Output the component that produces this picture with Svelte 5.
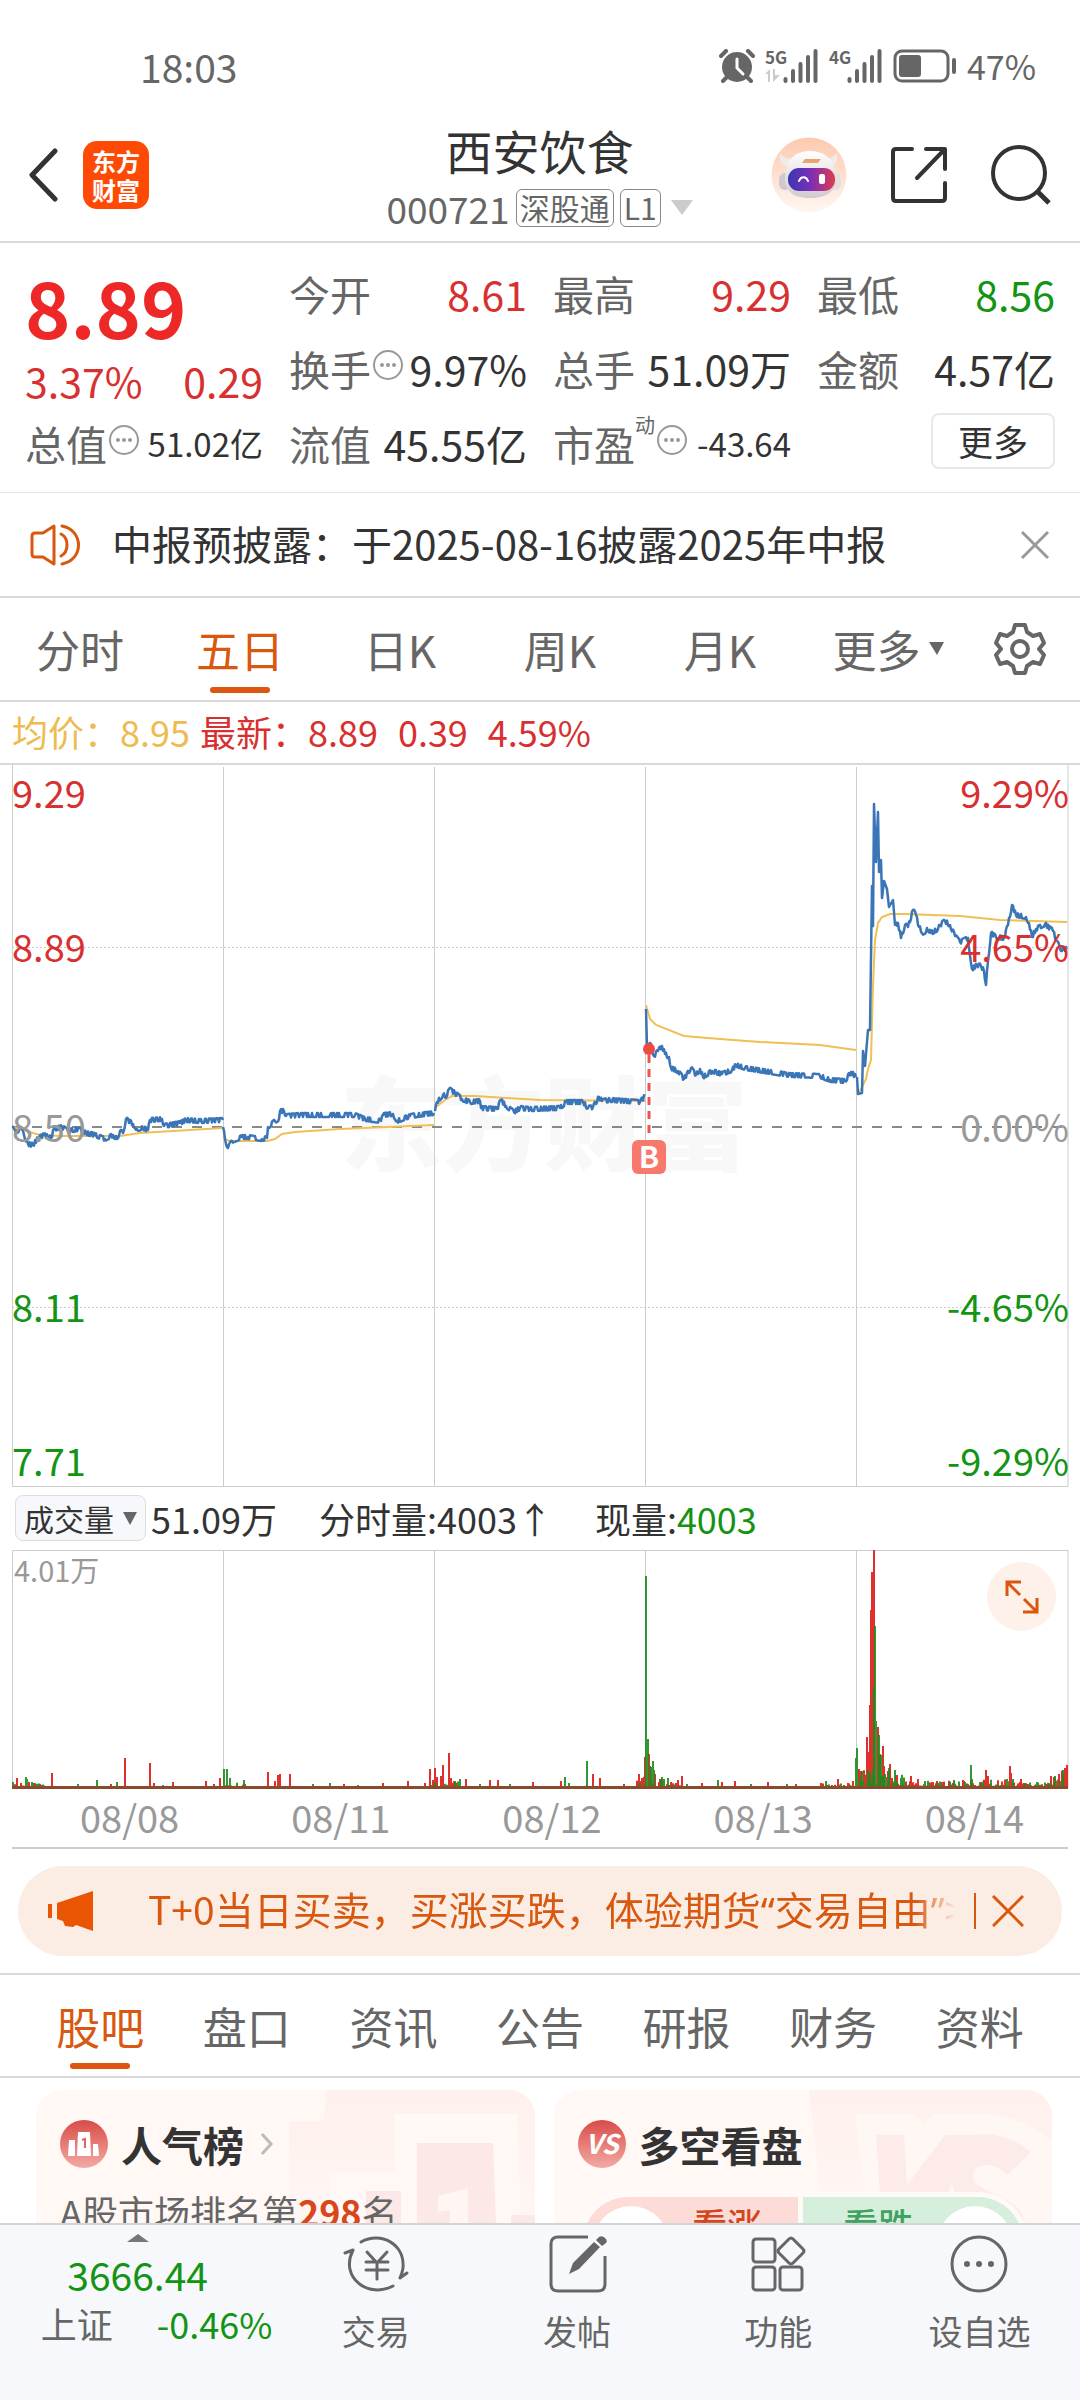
<script lang="ts">
  type Point = [number, number];
  type Bar = { x: number; h: number; up: boolean };

  const periods = ["分时", "五日", "日K", "周K", "月K"];
  const sections = ["股吧", "盘口", "资讯", "公告", "研报", "财务", "资料"];
  const dates = ["08/08", "08/11", "08/12", "08/13", "08/14"];
  const dayLines = [223, 434, 645, 856];

  let period = $state("五日");
  let section = $state("股吧");
  let showNotice = $state(true);
  let showPromo = $state(true);

  const priceLabels = [
    { y: 43, price: "9.29", pct: "9.29%", tone: "up" },
    { y: 197, price: "8.89", pct: "4.65%", tone: "up" },
    { y: 377, price: "8.50", pct: "0.00%", tone: "flat" },
    { y: 557, price: "8.11", pct: "-4.65%", tone: "down" },
    { y: 711, price: "7.71", pct: "-9.29%", tone: "down" },
  ];

  // one array per trading day
  const price: Point[][] = [
    [[12,362],[16,369],[20,362],[24,370],[28,379],[33,380],[38,373],[44,370],[51,373],[54,364],[62,362],[68,366],[78,364],[86,368],[95,370],[105,374],[113,370],[117,374],[120,366],[123,368],[126,354],[133,359],[137,364],[143,363],[148,365],[150,355],[162,354],[164,361],[180,358],[186,355],[200,356],[223,355]],
    [[223,362],[225,374],[228,383],[232,376],[242,372],[248,372],[262,374],[267,373],[268,362],[275,356],[279,354],[280,346],[284,346],[286,351],[300,350],[330,350],[355,350],[365,354],[381,356],[383,350],[393,349],[397,356],[410,351],[434,348]],
    [[435,346],[437,337],[443,330],[447,331],[449,324],[455,328],[462,334],[470,337],[480,336],[481,343],[497,344],[501,335],[506,341],[514,347],[520,343],[530,344],[560,343],[566,337],[583,337],[588,343],[593,342],[599,332],[602,336],[610,335],[640,337],[645,331]],
    [[646,244],[647,282],[650,278],[652,284],[654,291],[658,286],[662,281],[665,289],[669,292],[671,303],[678,306],[684,314],[691,303],[696,310],[700,304],[703,312],[712,306],[722,309],[732,305],[736,300],[745,303],[770,307],[790,310],[820,311],[830,315],[845,316],[851,307],[856,312]],
    [[857,312],[858,329],[862,328],[863,286],[865,301],[868,265],[870,265],[872,121],[873,161],[874,39],[876,97],[878,47],[879,107],[881,95],[882,133],[884,116],[887,124],[889,142],[893,135],[895,160],[898,158],[901,173],[905,160],[908,162],[913,145],[916,150],[919,162],[924,169],[927,163],[931,168],[938,164],[940,160],[945,156],[950,160],[955,171],[960,177],[968,173],[972,204],[977,200],[981,201],[984,206],[986,220],[988,196],[991,168],[996,172],[1004,173],[1008,160],[1012,140],[1016,150],[1026,152],[1029,158],[1032,172],[1036,164],[1045,159],[1053,166],[1057,176],[1060,184],[1067,184]],
  ];

  const average: Point[][] = [
    [[12,362],[40,370],[60,371],[120,371],[140,368],[223,363]],
    [[224,373],[229,376],[267,376],[275,374],[282,369],[295,367],[340,364],[434,360]],
    [[436,342],[445,335],[452,331],[475,331],[540,335],[645,336]],
    [[646,240],[648,247],[650,254],[656,260],[684,271],[720,274],[760,277],[820,280],[856,285]],
    [[858,329],[862,322],[866,314],[868,304],[871,295],[873,220],[875,175],[878,158],[882,152],[890,149],[905,149],[960,151],[1000,155],[1067,157]],
  ];

  function makeRandom(seed: number) {
    return () => {
      seed = (seed * 16807) % 2147483647;
      return seed / 2147483647;
    };
  }

  function toPath(points: Point[]) {
    return "M" + points.map(([x, y]) => `${x} ${y.toFixed(1)}`).join("L");
  }

  // adds the one-tick flicker of the minute data between two key points
  function withTicks(points: Point[], seed: number) {
    const random = makeRandom(seed);
    const out: Point[] = [points[0]];
    for (let i = 1; i < points.length; i++) {
      const [x0, y0] = points[i - 1];
      const [x1, y1] = points[i];
      for (let x = x0 + 1; x < x1; x += 1) {
        if (x > 857 && x < 895) continue;
        const y = y0 + ((y1 - y0) * (x - x0)) / (x1 - x0);
        out.push([x, y + (random() > 0.5 ? 2 : -2)]);
      }
      out.push([x1, y1]);
    }
    return toPath(out);
  }

  const upSpikes: Point[] = [
    [17,10],[21,5],[29,6],[40,4],[52,15],[111,4],[125,30],[150,25],[154,5],[173,6],[206,7],[214,4],[220,10],[268,16],[275,7],[278,13],[280,14],[290,14],[344,4],[383,5],[408,7],[425,5],[430,19],[433,8],[435,20],[437,11],[441,12],[443,23],[449,35],[451,10],[466,9],[490,8],[498,8],[533,6],[561,7],[593,14],[600,10],[624,4],[639,14],[641,7],
    [645,31],[649,34],[650,22],[655,14],[660,9],[671,6],[678,8],[682,12],[702,5],[722,6],[735,7],[768,6],[796,4],[838,9],[848,5],[853,7],
    [859,19],[861,17],[864,16],[867,51],[868,36],[870,83],[871,178],[872,216],[874,238],[878,61],[880,34],[883,42],[884,22],[890,24],[897,13],[911,12],[918,9],[933,6],[937,7],[942,6],[963,8],[986,18],[988,12],[1010,22],[1011,15],[1021,9],[1063,14],[1065,20],[1067,23],
  ];
  const downSpikes: Point[] = [
    [13,6],[26,11],[27,9],[32,6],[78,4],[97,8],[117,6],[163,3],[224,19],[227,19],[230,10],[244,8],[313,4],[330,5],[358,3],[455,7],[460,9],[480,4],[510,4],[565,11],[569,5],[587,27],
    [646,212],[648,49],[651,21],[653,27],[654,18],[662,11],[664,9],[668,10],[687,4],[718,8],[751,4],[787,4],[826,7],
    [856,30],[857,40],[862,17],[868,18],[874,100],[875,162],[876,67],[879,53],[881,33],[885,14],[889,20],[895,18],[901,10],[925,7],[950,6],[954,8],[971,23],[972,9],[1013,9],[1025,5],[1055,12],[1060,7],
  ];

  function volumeBars(): Bar[] {
    const random = makeRandom(97);
    const out: Bar[] = [];
    for (let x = 13; x < 1068; x += 1) {
      let top = 2;
      if (x < 45 || (x > 222 && x < 248) || (x > 428 && x < 460)) top = 6;
      if (x > 636 && x < 682) top = 14 - (x - 645) / 5;
      if (x > 820 && x < 857) top = 5;
      if (x > 856 && x < 890) top = 20;
      if (x >= 890 && x < 910) top = 18 - (x - 890) / 3;
      if (x >= 910) top = 9;
      if (x > 1040) top = 6 + (x - 1040) / 2;
      out.push({ x, h: Math.max(1, random() * random() * top + top * 0.15), up: random() > 0.4 });
    }
    for (const [x, h] of upSpikes) out.push({ x, h, up: true });
    for (const [x, h] of downSpikes) out.push({ x, h, up: false });
    return out;
  }

  const bars = volumeBars();

  function barPath(up: boolean) {
    return bars
      .filter((b) => b.up === up)
      .map((b) => `M${b.x} 238V${(238 - b.h).toFixed(1)}`)
      .join("");
  }
</script>

{#snippet info()}
  <svg class="info" viewBox="0 0 30 30" aria-hidden="true">
    <circle cx="15" cy="15" r="14" fill="none" stroke="#999" stroke-width="2" />
    <circle cx="9" cy="15" r="2" fill="#999" />
    <circle cx="15" cy="15" r="2" fill="#999" />
    <circle cx="21" cy="15" r="2" fill="#999" />
  </svg>
{/snippet}

{#snippet signal(label: string, data: boolean)}
  <svg class="signal" viewBox="0 0 54 34" aria-hidden="true">
    <text x="0" y="15" font-size="17" font-weight="700" fill="#666">{label}</text>
    {#if data}
      <path d="M0 25l5-5v13H3v-8zM8 20v13l7-7h-5v-6z" fill="#ccc" />
    {/if}
    <path
      d="M20.500 32v-2M28 32V22M35.500 32V15M43 32V8M50.500 32V2"
      stroke="#666"
      stroke-width="4"
      stroke-linecap="round"
    />
  </svg>
{/snippet}

<div class="app">
  <div class="status">
    <span class="clock">18:03</span>
    <div class="status-icons">
      <svg class="alarm" viewBox="0 0 36 34" aria-hidden="true">
        <path d="M2 7l5-5M34 7l-5-5M4 32l4-4M32 32l-4-4" stroke="#666" stroke-width="4" stroke-linecap="round" />
        <circle cx="18" cy="18" r="15" fill="#666" />
        <path d="M18 10v9l6 6" fill="none" stroke="#fff" stroke-width="3" stroke-linecap="round" />
      </svg>
      {@render signal("5G", true)}
      {@render signal("4G", false)}
      <svg class="battery" viewBox="0 0 64 34" aria-hidden="true">
        <rect x="2" y="2" width="53" height="30" rx="7" fill="none" stroke="#666" stroke-width="3" />
        <rect x="6" y="6" width="22" height="22" rx="3" fill="#666" />
        <path d="M61 11v12" stroke="#666" stroke-width="4" stroke-linecap="round" />
      </svg>
      <span class="percent">47%</span>
    </div>
  </div>

  <header class="header">
    <div class="side">
      <button class="icon-btn" aria-label="返回">
        <svg width="30" height="54" viewBox="0 0 30 54">
          <path d="M27 3L4 27l23 24" fill="none" stroke="#333" stroke-width="5" stroke-linecap="round" stroke-linejoin="round" />
        </svg>
      </button>
      <a class="logo" href="#home"><span>东方</span><span>财富</span></a>
    </div>
    <div class="title">
      <h1>西安饮食</h1>
      <div class="code">
        <span>000721</span>
        <span class="badge">深股通</span>
        <span class="badge">L1</span>
        <svg class="caret" width="22" height="15" viewBox="0 0 22 15" aria-hidden="true"><path d="M0 0h22L11 15z" fill="#ccc" /></svg>
      </div>
    </div>
    <div class="side right">
      <button class="icon-btn" aria-label="智能助手">
        <svg width="76" height="76" viewBox="0 0 76 76">
          <defs>
            <linearGradient id="halo" x1="0" y1="0" x2="0" y2="1">
              <stop offset="0" stop-color="#fdc9ae" />
              <stop offset="1" stop-color="#fff7f2" />
            </linearGradient>
            <linearGradient id="visor" x1="0" y1="0" x2="1" y2="0">
              <stop offset="0" stop-color="#3b37b4" />
              <stop offset="0.5" stop-color="#7d2fb5" />
              <stop offset="1" stop-color="#e23a4e" />
            </linearGradient>
            <linearGradient id="helmet" x1="0" y1="0" x2="0" y2="1">
              <stop offset="0" stop-color="#fff" />
              <stop offset="1" stop-color="#d0cacf" />
            </linearGradient>
          </defs>
          <circle cx="38" cy="38" r="37.500" fill="url(#halo)" />
          <path d="M9 16c-1 9 1 13 8 13l8-9c-8 3-13 1-16-4zM66 16c1 9-1 13-8 13l-8-9c8 3 13 1 16-4z" fill="#f1eaea" />
          <rect x="8" y="36" width="12" height="17" rx="6" fill="#cfc9cf" />
          <rect x="58" y="36" width="12" height="17" rx="6" fill="#e6dfe2" />
          <path d="M39 14c17 0 26 11 26 28 0 12-9 19-26 19S14 54 14 42c0-17 8-28 25-28z" fill="url(#helmet)" />
          <path d="M31 26l3-4h16l-3 4z" fill="#e8a570" />
          <rect x="17" y="31" width="47" height="23" rx="11" fill="url(#visor)" />
          <path d="M28 44c2-5 7-5 9 0" fill="none" stroke="#fff" stroke-width="2" stroke-linecap="round" />
          <rect x="48" y="37" width="6" height="10" rx="2" fill="#fff" />
        </svg>
      </button>
      <button class="icon-btn" aria-label="分享">
        <svg width="58" height="58" viewBox="0 0 58 58">
          <path d="M22 3H6Q3 3 3 6v46q0 3 3 3h46q3 0 3-3V37M36 3h19v20M54 4L27 32" fill="none" stroke="#333" stroke-width="4" stroke-linecap="round" stroke-linejoin="round" />
        </svg>
      </button>
      <button class="icon-btn" aria-label="搜索">
        <svg width="60" height="60" viewBox="0 0 60 60">
          <circle cx="28" cy="28" r="26" fill="none" stroke="#333" stroke-width="4" />
          <path d="M46 46l12 12" stroke="#333" stroke-width="5" />
        </svg>
      </button>
    </div>
  </header>

  <section class="quote">
    <div class="last">
      <strong>8.89</strong>
      <div class="change"><span>3.37%</span><span>0.29</span></div>
    </div>
    <div class="cell"><span class="label">今开</span><span class="up">8.61</span></div>
    <div class="cell"><span class="label">最高</span><span class="up">9.29</span></div>
    <div class="cell"><span class="label">最低</span><span class="down">8.56</span></div>
    <div class="cell"><span class="label">换手{@render info()}</span><span>9.97%</span></div>
    <div class="cell"><span class="label">总手</span><span>51.09万</span></div>
    <div class="cell"><span class="label">金额</span><span>4.57亿</span></div>
    <div class="cell"><span class="label">总值{@render info()}</span><span class="small">51.02亿</span></div>
    <div class="cell"><span class="label">流值</span><span>45.55亿</span></div>
    <div class="cell"><span class="label">市盈<sup>动</sup>{@render info()}</span><span class="small">-43.64</span></div>
    <div class="cell end"><button class="more">更多</button></div>
  </section>

  {#if showNotice}
    <div class="notice">
      <svg width="52" height="42" viewBox="0 0 52 42" aria-hidden="true">
        <path d="M24 2L13 9H5Q2 9 2 12v18q0 3 3 3h8l11 7z" fill="none" stroke="#d9580f" stroke-width="3" stroke-linejoin="round" />
        <path d="M31 10c8 4 8 18 0 22M32 2c22 4 22 34 0 38" fill="none" stroke="#d9580f" stroke-width="3" stroke-linecap="round" />
      </svg>
      <span>中报预披露：于2025-08-16披露2025年中报</span>
      <button class="icon-btn" aria-label="关闭公告" onclick={() => (showNotice = false)}>
        <svg width="30" height="30" viewBox="0 0 30 30"><path d="M2 2l26 26M28 2L2 28" stroke="#999" stroke-width="3" /></svg>
      </button>
    </div>
  {/if}

  <nav class="periods">
    {#each periods as name}
      <button class="tab" class:active={period === name} onclick={() => (period = name)}>{name}</button>
    {/each}
    <button class="tab more-tab">更多<svg width="15" height="14" viewBox="0 0 15 14" aria-hidden="true"><path d="M0 0h15L8 13z" fill="#666" /></svg></button>
    <button class="tab" aria-label="设置">
      <svg width="52" height="52" viewBox="0 0 52 52">
        <path d="M21 2h10l2 7 6 4 7-2 4 9-5 6 5 6-4 9-7-2-6 4-2 7H21l-2-7-6-4-7 2-4-9 5-6-5-6 4-9 7 2 6-4z" fill="none" stroke="#666" stroke-width="4" stroke-linejoin="round" />
        <circle cx="26" cy="26" r="8" fill="none" stroke="#666" stroke-width="4" />
      </svg>
    </button>
  </nav>

  <div class="legend">
    <span class="avg">均价：8.95</span>
    <span>最新：8.89</span>
    <span class="spaced">0.39</span>
    <span class="spaced">4.59%</span>
  </div>

  <svg class="chart" viewBox="0 0 1080 722" role="img" aria-label="五日走势">
    <text class="watermark" x="544" y="398" text-anchor="middle">东方财富</text>
    <path d="M12.500 0V721.500H1068V0" fill="none" stroke="#ccc" />
    {#each dayLines as x}
      <path d={`M${x + 0.5} 2V722`} stroke="#ccc" />
    {/each}
    <path d="M12 182.500H1068M12 542.500H1068" stroke="#ccc" stroke-dasharray="2 2" />
    <path d="M12 362H1068" stroke="#888" stroke-width="2" stroke-dasharray="10 10" />
    {#each average as day}
      <path d={toPath(day)} fill="none" stroke="#f0bf55" stroke-width="2" />
    {/each}
    {#each price as day, i}
      <path d={withTicks(day, 31 + i * 7)} fill="none" stroke="#3a75b7" stroke-width="2.5" stroke-linejoin="round" />
    {/each}
    {#each priceLabels as row}
      <text class="axis {row.tone}" x="12" y={row.y}>{row.price}</text>
      <text class="axis {row.tone}" x="1069" y={row.y} text-anchor="end">{row.pct}</text>
    {/each}
    <path d="M649 290v84" stroke="#ef5350" stroke-width="3" stroke-dasharray="8 6" />
    <circle cx="649" cy="284" r="6" fill="#ee4b40" />
    <rect x="632" y="375" width="34" height="34" rx="6" fill="#f7796b" />
    <text x="649" y="403" font-size="30" font-weight="700" fill="#fff" text-anchor="middle">B</text>
  </svg>

  <div class="volume-head">
    <button class="metric">成交量<svg width="14" height="13" viewBox="0 0 14 13" aria-hidden="true"><path d="M0 0h14L7 13z" fill="#666" /></svg></button>
    <span>51.09万</span>
    <span class="minute">分时量:4003↑</span>
    <span class="current">现量:<b>4003</b></span>
  </div>

  <div class="volume">
    <svg class="chart" viewBox="0 0 1080 239" role="img" aria-label="成交量">
      <path d="M12.500 238V.5H1068V238" fill="none" stroke="#ccc" />
      {#each dayLines as x}
        <path d={`M${x + 0.5} 0V238`} stroke="#ccc" />
      {/each}
      <path d={barPath(true)} stroke="#e0302c" stroke-width="2" />
      <path d={barPath(false)} stroke="#1d8c1d" stroke-width="2" stroke-opacity="0.9" />
      <path d="M12 237.500H1068" stroke="#8a4a2c" stroke-width="3" />
      <text x="14" y="32" font-size="29" fill="#999">4.01万</text>
    </svg>
    <button class="expand" aria-label="全屏">
      <svg width="34" height="34" viewBox="0 0 34 34">
        <path d="M2 16V2h14M3 3l12 12M32 18v14H18M31 31L19 19" fill="none" stroke="#d9580f" stroke-width="3" />
      </svg>
    </button>
  </div>

  <div class="dates">
    {#each dates as date}
      <span>{date}</span>
    {/each}
  </div>

  {#if showPromo}
    <div class="promo">
      <svg width="46" height="40" viewBox="0 0 46 40" aria-hidden="true">
        <path d="M0 13h4v14H0zM9 12L45 0v40l-17-6-3 2-8-1-2-5-6-2z" fill="#ea5504" />
      </svg>
      <a href="#promo">T+0当日买卖，买涨买跌，体验期货<q>交易自由</q>&gt;</a>
      <i class="divider"></i>
      <button class="icon-btn" aria-label="关闭推广" onclick={() => (showPromo = false)}>
        <svg width="32" height="32" viewBox="0 0 32 32"><path d="M1 1l30 30M31 1L1 31" stroke="#d9580f" stroke-width="3" /></svg>
      </button>
    </div>
  {/if}

  <nav class="sections">
    {#each sections as name}
      <button class="tab" class:active={section === name} onclick={() => (section = name)}>{name}</button>
    {/each}
  </nav>

  <div class="cards">
    <article class="card">
      <svg class="card-bg" viewBox="0 0 246 134" aria-hidden="true">
        <defs>
          <linearGradient id="fade" x1="0" y1="0" x2="0" y2="1">
            <stop offset="0" stop-color="#fef0ed" />
            <stop offset="1" stop-color="#fff6f3" />
          </linearGradient>
        </defs>
        <path d="M37 0h209v134h-14L228 24H106v58H40v52H-10V31h45z" fill="url(#fade)" />
        <path d="M128 53h76l3 81h-79z" fill="#fce8e6" />
        <path d="M77 101h35v33H77zM222 125h24v9h-24z" fill="#fce8e6" />
        <path d="M149 106l30-8v36h-18v-14l-12 2z" fill="#fff5f2" />
      </svg>
      <h2>
        <svg class="card-icon" viewBox="0 0 48 48" aria-hidden="true">
          <defs>
            <linearGradient id="disc" x1="0" y1="0" x2="0" y2="1">
              <stop offset="0" stop-color="#d94c48" />
              <stop offset="1" stop-color="#f3aaa5" />
            </linearGradient>
          </defs>
          <circle cx="24" cy="24" r="24" fill="url(#disc)" />
          <path d="M18 12h12l1 24H17zM9 20h6v16H8zM33 24h5l1 12h-6z" fill="#fff" />
          <path d="M22 20l3-1v9" fill="none" stroke="#dd6762" stroke-width="2" />
        </svg>
        人气榜
        <svg class="chevron" width="14" height="24" viewBox="0 0 14 24" aria-hidden="true"><path d="M2 2l9 10-9 10" fill="none" stroke="#bbb" stroke-width="3" /></svg>
      </h2>
      <p>A股市场排名第<b>298</b>名</p>
    </article>
    <article class="card">
      <svg class="card-bg" viewBox="0 0 246 134" aria-hidden="true">
        <path d="M3 0h243v134H18z" fill="url(#fade)" />
        <path d="M49 24h60l8 12 10-12h34c40-2 66 10 85 28v82H62z" fill="#fff7f4" />
        <path d="M70 45h28l3 50 38-50h29c20-3 41 4 57 17l-24 23c-12-14-34-13-34 1 0 18 48 17 52 48h-62l-11-40-20 40H76z" fill="#fdebe9" />
      </svg>
      <h2>
        <svg class="card-icon" viewBox="0 0 48 48" aria-hidden="true">
          <circle cx="24" cy="24" r="24" fill="url(#disc)" />
          <text x="24" y="34" font-size="27" font-weight="700" font-style="italic" fill="#fff" text-anchor="middle">VS</text>
        </svg>
        多空看盘
      </h2>
      <div class="vote">
        <button class="bull"><i></i>看涨</button>
        <button class="bear">看跌<i></i></button>
      </div>
    </article>
  </div>

  <nav class="bottom">
    <a class="index" href="#index">
      <svg width="22" height="8" viewBox="0 0 22 8" aria-hidden="true"><path d="M0 8L11 0l11 8z" fill="#777" /></svg>
      <span class="down">3666.44</span>
      <span class="index-row"><span>上证</span><span class="down">-0.46%</span></span>
    </a>
    <a href="#trade">
      <svg viewBox="0 0 66 60" aria-hidden="true">
        <g fill="none" stroke="#666" stroke-width="3" stroke-linecap="round" stroke-linejoin="round">
          <path d="M18 8C38-3 62 10 60 34q-1 6-3 10l7-5" />
          <path d="M50 52C26 65-4 44 10 16L2 19" />
          <path d="M24 18l10 11 10-11M34 29v16M23 28h22M23 36h22" />
        </g>
      </svg>
      交易
    </a>
    <a href="#post">
      <svg viewBox="0 0 66 60" aria-hidden="true">
        <path d="M44 3H14Q7 3 7 10v40q0 7 7 7h40q7 0 7-7V22" fill="none" stroke="#666" stroke-width="3" />
        <path d="M25 40l4-11L50 8l6 5-21 22zM52 6l3-3q3-2 6 1t1 5l-4 3z" fill="#666" />
      </svg>
      发帖
    </a>
    <a href="#tools">
      <svg viewBox="0 0 66 60" aria-hidden="true">
        <g fill="none" stroke="#666" stroke-width="3">
          <rect x="8" y="5" width="22" height="23" rx="3" />
          <rect x="8" y="33" width="22" height="23" rx="3" />
          <rect x="35" y="33" width="22" height="23" rx="3" />
          <path d="M44 5q2-2 4 0l10 10q2 2 0 4L48 29q-2 2-4 0L34 19q-2-2 0-4z" />
        </g>
      </svg>
      功能
    </a>
    <a href="#watch">
      <svg viewBox="0 0 66 60" aria-hidden="true">
        <circle cx="33" cy="30" r="27" fill="none" stroke="#666" stroke-width="3" />
        <g fill="#666">
          <circle cx="21" cy="30" r="3" />
          <circle cx="33" cy="30" r="3" />
          <circle cx="45" cy="30" r="3" />
        </g>
      </svg>
      设自选
    </a>
  </nav>
</div>

<style>
  :global(body) {
    margin: 0;
    background: #fff;
  }

  .app {
    height: 100vh;
    display: flex;
    flex-direction: column;
    overflow: hidden;
    color: #333;
    font-family: "Noto Sans CJK SC", "Noto Sans", sans-serif;
    font-size: 36px;
    line-height: 40px;
  }

  .app > * {
    flex: none;
    box-sizing: border-box;
  }

  button {
    border: 0;
    padding: 0;
    background: none;
    color: inherit;
    font: inherit;
    cursor: pointer;
  }

  a {
    color: inherit;
    text-decoration: none;
  }

  svg {
    display: block;
  }

  h1,
  h2,
  p {
    margin: 0;
  }

  .up {
    color: #d83030;
    fill: #d83030;
  }

  .down {
    color: #149414;
    fill: #149414;
  }

  .icon-btn {
    display: flex;
  }

  /* status bar */
  .status {
    height: 94px;
    padding: 38px 44px 0 140px;
    display: flex;
    justify-content: space-between;
    align-items: center;
    color: #666;
  }

  .clock {
    font-size: 39px;
  }

  .status-icons {
    display: flex;
    align-items: center;
    gap: 10px;
  }

  .alarm {
    width: 36px;
    height: 34px;
  }

  .signal {
    width: 54px;
    height: 34px;
    overflow: visible;
  }

  .battery {
    width: 64px;
    height: 34px;
  }

  .percent {
    font-size: 34px;
  }

  /* header */
  .header {
    height: 149px;
    padding: 14px 29px 0 28px;
    display: flex;
    align-items: center;
    border-bottom: 2px solid #d9d9d9;
  }

  .side {
    flex: 1;
    display: flex;
    align-items: center;
    gap: 25px;
  }

  .right {
    justify-content: flex-end;
    gap: 43px;
  }

  .logo {
    width: 66px;
    height: 68px;
    border-radius: 14px;
    background: #ff4a05;
    color: #fff;
    display: flex;
    flex-direction: column;
    align-items: center;
    justify-content: center;
    font-size: 24px;
    font-weight: 700;
    line-height: 29px;
  }

  .title {
    display: flex;
    flex-direction: column;
    align-items: center;
    gap: 10px;
  }

  h1 {
    font-size: 47px;
    font-weight: 400;
    line-height: 56px;
  }

  .code {
    display: flex;
    align-items: center;
    gap: 6px;
    color: #666;
    font-size: 37px;
  }

  .badge {
    box-sizing: border-box;
    height: 38px;
    padding: 0 3px;
    border: 1px solid #888;
    border-radius: 6px;
    font-size: 30px;
    line-height: 35px;
  }

  .caret {
    margin-left: 4px;
  }

  /* quote */
  .quote {
    padding: 12px 25px;
    display: grid;
    grid-template-columns: repeat(4, minmax(0, 1fr));
    grid-auto-rows: 75px;
    column-gap: 26px;
    border-bottom: 1px solid #e5e5e5;
    font-size: 41px;
  }

  .last {
    grid-row: span 2;
    display: flex;
    flex-direction: column;
    padding-top: 6px;
    color: #ee2727;
  }

  .last strong {
    font-size: 77px;
    font-weight: 700;
    line-height: 90px;
  }

  .change {
    display: flex;
    justify-content: space-between;
    padding-top: 4px;
    line-height: 50px;
    color: #d83030;
  }

  .cell {
    display: flex;
    justify-content: space-between;
    align-items: center;
    white-space: nowrap;
  }

  .label {
    display: flex;
    align-items: center;
    color: #666;
  }

  .label sup {
    align-self: flex-start;
    font-size: 20px;
    line-height: 20px;
    margin-top: -8px;
  }

  .info {
    width: 30px;
    height: 30px;
    margin: 0 0 6px 2px;
  }

  .small {
    font-size: 33px;
  }

  .end {
    justify-content: flex-end;
  }

  .more {
    width: 124px;
    height: 56px;
    margin-bottom: 4px;
    border: 2px solid #e8e8e8;
    border-radius: 8px;
    font-size: 35px;
  }

  /* notice */
  .notice {
    height: 105px;
    padding: 0 30px;
    display: flex;
    align-items: center;
    border-bottom: 2px solid #d9d9d9;
    font-size: 40px;
  }

  .notice span {
    flex: 1;
    padding: 0 0 4px 30px;
  }

  /* tabs */
  .periods,
  .sections {
    display: grid;
    border-bottom: 2px solid #d9d9d9;
  }

  .periods {
    height: 104px;
    grid-template-columns: repeat(6, 4fr) 3fr;
  }

  .sections {
    height: 105px;
    padding: 0 27px;
    grid-template-columns: repeat(7, 1fr);
    border-top: 2px solid #d9d9d9;
  }

  .tab {
    position: relative;
    display: flex;
    align-items: center;
    justify-content: center;
    color: #666;
    font-size: 44px;
  }

  .active {
    color: #d9580f;
  }

  .active::after {
    content: "";
    position: absolute;
    bottom: 7px;
    width: 60px;
    height: 6px;
    border-radius: 3px;
    background: #dd560f;
  }

  .more-tab {
    padding-left: 16px;
    gap: 8px;
  }

  /* price chart */
  .legend {
    height: 63px;
    padding: 0 12px 3px;
    display: flex;
    align-items: center;
    gap: 10px;
    border-bottom: 2px solid #d9d9d9;
    color: #d83030;
    font-size: 36px;
  }

  .avg {
    color: #edbb50;
  }

  .spaced {
    margin-left: 10px;
  }

  .chart {
    width: 100%;
    height: auto;
  }

  .axis {
    font-size: 38px;
  }

  .flat {
    fill: #999;
  }

  .watermark {
    fill: #f8f8f8;
    font-size: 102px;
    font-weight: 900;
  }

  /* volume */
  .volume-head {
    height: 63px;
    padding: 0 15px 1px;
    display: flex;
    align-items: center;
  }

  .metric {
    box-sizing: border-box;
    height: 46px;
    margin-right: 5px;
    padding: 0 8px;
    display: flex;
    align-items: center;
    gap: 9px;
    border: 1px solid #ddd;
    border-radius: 8px;
    background: #f7f8fb;
    font-size: 30px;
  }

  .minute {
    margin-left: 42px;
  }

  .current {
    margin-left: 42px;
  }

  .current b {
    color: #149414;
    font-weight: 400;
  }

  .volume {
    position: relative;
  }

  .expand {
    position: absolute;
    top: 12px;
    right: 24px;
    width: 69px;
    height: 69px;
    border-radius: 50%;
    background: #fef1ea;
    display: flex;
    align-items: center;
    justify-content: center;
  }

  .dates {
    height: 60px;
    margin: 0 12px;
    display: grid;
    grid-template-columns: repeat(5, 1fr);
    align-items: center;
    border-bottom: 2px solid #ccc;
    color: #999;
    font-size: 38px;
    text-align: center;
  }

  .dates span {
    padding: 0 0 3px 24px;
  }

  /* promo */
  .promo {
    height: 90px;
    margin: 17px 18px;
    padding: 0 38px 0 30px;
    display: flex;
    align-items: center;
    border-radius: 45px;
    background: #fcede4;
    color: #d9580f;
    font-size: 39px;
  }

  .promo a {
    flex: 1;
    min-width: 0;
    margin-left: 54px;
    padding-bottom: 4px;
    overflow: hidden;
    white-space: nowrap;
    mask-image: linear-gradient(to right, #000 95%, transparent);
  }

  /* narrow quote marks; the CJK face draws them full width */
  .promo q {
    quotes: "“" "”";
  }

  .promo q::before,
  .promo q::after {
    font-family: "Noto Sans", sans-serif;
  }

  .divider {
    width: 2px;
    height: 36px;
    margin: 0 16px 0 18px;
    background: #d9580f;
  }

  /* cards */
  .app > .cards {
    flex: 1;
    min-height: 0;
    padding: 12px 28px 0 36px;
    display: flex;
    gap: 19px;
    overflow: hidden;
  }

  .card {
    position: relative;
    flex: 1;
    height: 260px;
    padding: 30px 24px 0;
    border-radius: 26px;
    background: #fff8f5;
    overflow: hidden;
  }

  .card-bg {
    position: absolute;
    top: 0;
    right: 0;
    width: 246px;
    height: 134px;
  }

  h2 {
    position: relative;
    display: flex;
    align-items: center;
    font-size: 41px;
    font-weight: 700;
    line-height: 48px;
  }

  .card-icon {
    width: 48px;
    height: 48px;
    margin-right: 13px;
  }

  .chevron {
    margin-left: 16px;
  }

  p {
    position: relative;
    padding-top: 23px;
    color: #666;
  }

  p b {
    color: #d8461a;
  }

  .vote {
    position: relative;
    height: 90px;
    margin-top: 24px;
    display: flex;
    gap: 5px;
    border: 5px solid #fffaf8;
    border-radius: 50px;
    background: #fffaf8;
    overflow: hidden;
  }

  .vote button {
    flex: 1;
    display: flex;
    align-items: center;
    justify-content: space-between;
    font-size: 35px;
    font-weight: 500;
    line-height: 35px;
    padding: 0 36px 38px 10px;
  }

  .vote .bull {
    background: #fddcd8;
    color: #d4461c;
  }

  .vote .bear {
    padding: 0 10px 38px 40px;
    background: #d5efdc;
    color: #41a35f;
  }

  .vote i {
    width: 76px;
    height: 76px;
    margin-top: 42px;
    border-radius: 50%;
    background: #fff;
  }

  /* bottom bar */
  .bottom {
    height: 177px;
    display: grid;
    grid-template-columns: 275fr repeat(4, 201fr);
    border-top: 2px solid #d4d4d8;
    background: #f7f8fb;
    color: #666;
  }

  .bottom a {
    display: flex;
    flex-direction: column;
    align-items: center;
    padding-top: 9px;
    font-size: 34px;
  }

  .bottom a:not(.index) svg {
    width: 66px;
    height: 60px;
    margin-bottom: 17px;
  }

  .bottom .index {
    font-size: 39px;
  }

  .index > .down {
    margin-top: 12px;
  }

  .index-row {
    margin-top: 9px;
    padding-left: 38px;
    display: flex;
    gap: 44px;
    font-size: 36px;
  }
</style>
